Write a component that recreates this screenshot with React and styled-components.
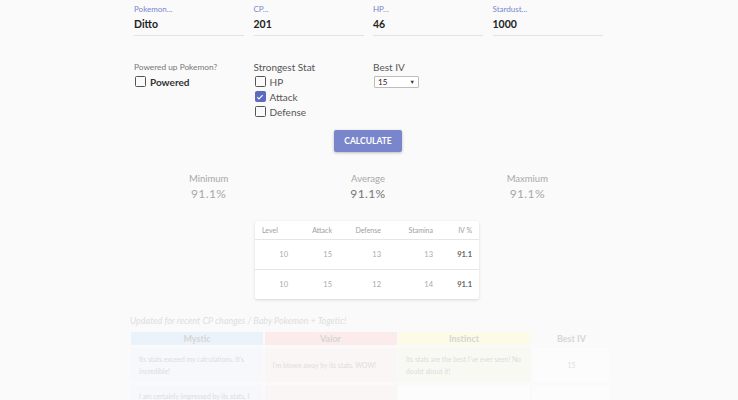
import React from "react";
import styled, { createGlobalStyle } from "styled-components";

const GlobalStyle = createGlobalStyle`
  body {
    margin: 0;
    background: #fafafa;
    font-family: Lato, "Open Sans", sans-serif;
    color: #444;
  }
`;

const Page = styled.div`
  width: 480px;
  margin: 0 auto;
  height: 400px;
  overflow: hidden;
`;

const FieldRow = styled.div`
  display: grid;
  grid-template-columns: repeat(4, 110px);
  column-gap: 9.5px;
  padding-left: 5px;
`;

const Field = styled.div`
  padding: 4px 0 4px;
  border-bottom: 1px solid #e2e2e2;
`;

const FieldLabel = styled.div`
  font-size: 8px;
  line-height: 10px;
  color: #7986cb;
`;

const FieldValue = styled.div`
  margin-top: 3px;
  font-size: 10.5px;
  line-height: 14px;
  font-weight: 700;
  color: #222;
`;

const OptionRow = styled.div`
  display: grid;
  grid-template-columns: repeat(4, 110px);
  column-gap: 9.5px;
  padding-left: 5px;
  margin-top: 24px;
`;

const OptionTitle = styled.div`
  font-size: ${(p) => (p.$small ? "8.3px" : "10px")};
  line-height: 14px;
  height: 14px;
  color: ${(p) => (p.$small ? "#777" : "#555")};
`;

const CheckLine = styled.label`
  display: flex;
  align-items: center;
  height: 15px;
  font-size: 10px;
  font-weight: ${(p) => (p.$bold ? 700 : 400)};
  color: ${(p) => (p.$bold ? "#333" : "#555")};
`;

const Box = styled.span`
  width: 9px;
  height: 9px;
  margin: 0 4px 0 1px;
  border: 1.3px solid ${(p) => (p.$checked ? "#5c6bc0" : "#555")};
  border-radius: 1.5px;
  background: ${(p) => (p.$checked ? "#5c6bc0" : "transparent")};
  display: flex;
  align-items: center;
  justify-content: center;
`;

const Select = styled.div`
  margin-top: 2px;
  width: 37px;
  height: 10px;
  border: 1px solid #bdbdbd;
  border-radius: 1px;
  background: #fff;
  display: flex;
  align-items: center;
  justify-content: space-between;
  padding: 0 3px;
  box-sizing: content-box;
  font-size: 8px;
  color: #222;
  margin-left: 1px;
`;

const Caret = styled.span`
  font-size: 5.5px;
  color: #333;
`;

const ButtonWrap = styled.div`
  display: flex;
  justify-content: center;
  margin-top: 11px;
  padding-right: 2px;
`;

const Button = styled.button`
  width: 68px;
  height: 22px;
  border: none;
  border-radius: 2px;
  background: #7986cb;
  color: #fff;
  font-family: Lato, sans-serif;
  font-weight: 700;
  font-size: 8.5px;
  padding: 0;
  box-shadow: 0 1px 3px rgba(0, 0, 0, 0.25);
`;

const Stats = styled.div`
  display: grid;
  grid-template-columns: repeat(3, 1fr);
  margin-top: 20px;
  padding-right: 2px;
`;

const Stat = styled.div`
  text-align: center;
`;

const StatLabel = styled.div`
  font-size: 9.5px;
  line-height: 14px;
  color: #a8a8a8;
`;

const StatValue = styled.div`
  font-size: 12px;
  line-height: 16px;
  color: ${(p) => (p.$strong ? "#757575" : "#a8a8a8")};
  letter-spacing: 0.4px;
`;

const Card = styled.div`
  width: 224px;
  margin: 19px auto 0;
  position: relative;
  left: -2px;
  background: #fff;
  box-shadow: 0 1px 3px rgba(0, 0, 0, 0.14);
  border-radius: 2px;
`;

const Grid = styled.div`
  display: grid;
  grid-template-columns: 36px 48px 49px 52px 39px;
`;

const HeadCell = styled.div`
  height: 18px;
  line-height: 18px;
  font-size: 7px;
  color: #a0a0a0;
  text-align: ${(p) => (p.$left ? "left" : "right")};
  padding: ${(p) => (p.$left ? "0 0 0 7px" : "0 7px 0 0")};
  border-bottom: 1px solid #e6e6e6;
`;

const DataCell = styled.div`
  height: 29px;
  line-height: 29px;
  font-size: 7.5px;
  text-align: right;
  padding-right: ${(p) => (p.$first ? "3px" : "7px")};
  color: ${(p) => (p.$bold ? "#666" : "#aaa")};
  font-weight: ${(p) => (p.$bold ? 700 : 400)};
  border-bottom: ${(p) => (p.$last ? "none" : "1px solid #e6e6e6")};
`;

const Note = styled.div`
  margin-top: 16px;
  padding-left: 1px;
  font-size: 9px;
  font-style: italic;
  color: #dedede;
`;

const TeamTable = styled.div`
  display: grid;
  grid-template-columns: 132px 132px 132px 80px;
  column-gap: 1.5px;
  margin-top: 6px;
  padding-left: 2px;
`;

const teamBg = {
  mystic: "#eaf2fb",
  valor: "#fcebeb",
  instinct: "#fbfbe6",
  none: "transparent",
};

const cellBg = {
  mystic: "#f6f8fb",
  valor: "#fbf6f6",
  instinct: "#f9f9f4",
  none: "#fcfcfc",
};

const TeamHead = styled.div`
  height: 13px;
  line-height: 13px;
  text-align: center;
  font-size: 9px;
  font-weight: 700;
  color: #d6d6d6;
  background: ${(p) => teamBg[p.$team]};
`;

const TeamCell = styled.div`
  margin-top: 3px;
  height: 34px;
  padding: 0 8px;
  display: flex;
  align-items: center;
  justify-content: ${(p) => (p.$center ? "center" : "flex-start")};
  font-size: 6.8px;
  line-height: 12.5px;
  color: #dddddd;
  background: ${(p) => cellBg[p.$team]};
`;

const Check = () => (
  <svg width="8" height="8" viewBox="0 0 24 24">
    <path d="M4 12.5l5 5L20 6.5" fill="none" stroke="#fff" strokeWidth="3.5" />
  </svg>
);

const CheckItem = ({ label, checked, bold }) => (
  <CheckLine $bold={bold}>
    <Box $checked={checked}>{checked && <Check />}</Box>
    {label}
  </CheckLine>
);

const fields = [
  ["Pokemon...", "Ditto"],
  ["CP...", "201"],
  ["HP...", "46"],
  ["Stardust...", "1000"],
];

const rows = [
  [10, 15, 13, 13, "91.1"],
  [10, 15, 12, 14, "91.1"],
];

export default function App() {
  return (
    <>
      <GlobalStyle />
      <Page>
        <FieldRow>
          {fields.map(([label, value]) => (
            <Field key={label}>
              <FieldLabel>{label}</FieldLabel>
              <FieldValue>{value}</FieldValue>
            </Field>
          ))}
        </FieldRow>

        <OptionRow>
          <div>
            <OptionTitle $small>Powered up Pokemon?</OptionTitle>
            <CheckItem label="Powered" bold />
          </div>
          <div>
            <OptionTitle>Strongest Stat</OptionTitle>
            <CheckItem label="HP" />
            <CheckItem label="Attack" checked />
            <CheckItem label="Defense" />
          </div>
          <div>
            <OptionTitle>Best IV</OptionTitle>
            <Select>
              15<Caret>▼</Caret>
            </Select>
          </div>
        </OptionRow>

        <ButtonWrap>
          <Button>CALCULATE</Button>
        </ButtonWrap>

        <Stats>
          <Stat>
            <StatLabel>Minimum</StatLabel>
            <StatValue>91.1%</StatValue>
          </Stat>
          <Stat>
            <StatLabel>Average</StatLabel>
            <StatValue $strong>91.1%</StatValue>
          </Stat>
          <Stat>
            <StatLabel>Maxmium</StatLabel>
            <StatValue>91.1%</StatValue>
          </Stat>
        </Stats>

        <Card>
          <Grid>
            <HeadCell $left>Level</HeadCell>
            <HeadCell>Attack</HeadCell>
            <HeadCell>Defense</HeadCell>
            <HeadCell>Stamina</HeadCell>
            <HeadCell>IV %</HeadCell>
            {rows.map((r, i) =>
              r.map((v, j) => (
                <DataCell
                  key={`${i}-${j}`}
                  $first={j === 0}
                  $bold={j === 4}
                  $last={i === rows.length - 1}
                >
                  {v}
                </DataCell>
              ))
            )}
          </Grid>
        </Card>

        <Note>Updated for recent CP changes / Baby Pokemon + Togetic!</Note>

        <TeamTable>
          <TeamHead $team="mystic">Mystic</TeamHead>
          <TeamHead $team="valor">Valor</TeamHead>
          <TeamHead $team="instinct">Instinct</TeamHead>
          <TeamHead $team="none">Best IV</TeamHead>
          <TeamCell $team="mystic">
            Its stats exceed my calculations. It's incredible!
          </TeamCell>
          <TeamCell $team="valor">I'm blown away by its stats. WOW!</TeamCell>
          <TeamCell $team="instinct">
            Its stats are the best I've ever seen! No doubt about it!
          </TeamCell>
          <TeamCell $team="none" $center>
            15
          </TeamCell>
          <TeamCell $team="mystic">
            I am certainly impressed by its stats, I must say.
          </TeamCell>
          <TeamCell $team="valor" />
          <TeamCell $team="none" />
          <TeamCell $team="none" />
        </TeamTable>
      </Page>
    </>
  );
}
